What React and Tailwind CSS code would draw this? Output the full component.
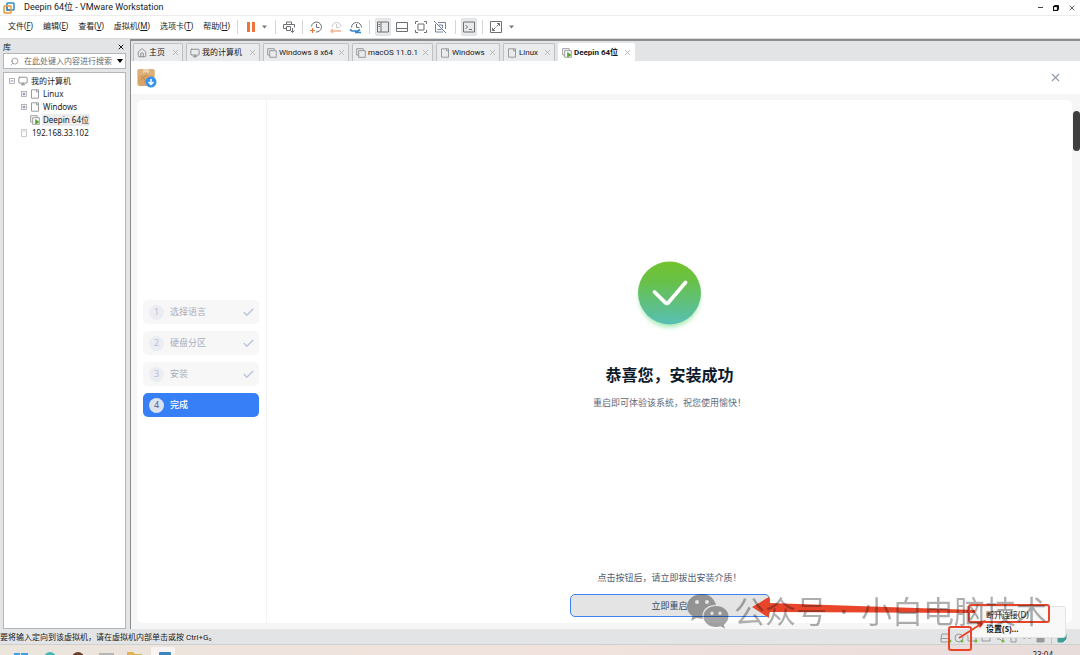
import React, { useState } from 'react';
import { Home, Monitor, X, Search, Check } from 'lucide-react';

const menus = [
  { label: '文件', key: 'F' },
  { label: '编辑', key: 'E' },
  { label: '查看', key: 'V' },
  { label: '虚拟机', key: 'M' },
  { label: '选项卡', key: 'T' },
  { label: '帮助', key: 'H' },
];

const tabs = [
  { id: 'home', label: '主页', icon: 'home', width: 'w-[50px]' },
  { id: 'pc', label: '我的计算机', icon: 'monitor', width: 'w-[74px]' },
  { id: 'win8', label: 'Windows 8 x64', icon: 'stack', width: 'w-[86px]' },
  { id: 'mac', label: 'macOS 11.0.1', icon: 'stack', width: 'w-[81px]' },
  { id: 'win', label: 'Windows', icon: 'page', width: 'w-[64px]' },
  { id: 'linux', label: 'Linux', icon: 'page', width: 'w-[52px]' },
  { id: 'deepin', label: 'Deepin 64位', icon: 'running', width: 'w-[77px]' },
];

const steps = ['选择语言', '硬盘分区', '安装', '完成'];

const PageIcon = () => (
  <svg className="size-[10px] shrink-0" viewBox="0 0 10 10" fill="none" stroke="#8f9193" strokeWidth="0.9">
    <path d="M1.500 .8h7v8.400h-7z" />
    <path d="M6.500 .8v2h2" />
  </svg>
);

const StackIcon = ({ running }) => (
  <svg className="size-[10px] shrink-0" viewBox="0 0 10 10" fill="none" stroke="#8f9193" strokeWidth="0.9">
    <path d="M2.500 7H.700V.700h6.500v1.800" />
    <path d="M2.700 2.700h6.600v6.600H2.700z" />
    {running && <path d="M5 3.800l5 3.100-5 3.100z" fill="#56a632" stroke="white" strokeWidth="0.3" />}
  </svg>
);

const VmIcon = ({ type }) => {
  if (type === 'home') return <Home size={10} strokeWidth={2} className="shrink-0 text-[#7d7f81]" />;
  if (type === 'monitor') return <Monitor size={10} strokeWidth={2} className="shrink-0 text-[#7d7f81]" />;
  if (type === 'page') return <PageIcon />;
  return <StackIcon running={type === 'running'} />;
};

const Expander = ({ open }) => (
  <svg className="size-[6px] shrink-0" viewBox="0 0 6 6" fill="white" stroke="#9a9a9a" strokeWidth="0.7">
    <rect x=".4" y=".4" width="5.200" height="5.200" />
    <path d={open ? 'M1.500 3h3' : 'M1.500 3h3M3 1.500v3'} stroke="#4a5f92" />
  </svg>
);

const ToolButton = ({ label, pressed, children }) => (
  <button
    type="button"
    aria-label={label}
    className={`flex h-[18px] w-4 items-center justify-center rounded-[2px] border ${pressed ? 'border-[#e0e1e2] bg-[#e8e9ea]' : 'border-transparent'}`}
  >
    <svg className="size-[14px] shrink-0" viewBox="0 0 14 14" fill="none" stroke="#6d6f72" strokeWidth="1">
      {children}
    </svg>
  </button>
);

const Separator = () => <span className="h-[14px] w-px bg-[#d5d5d5]" />;

const Caret = () => (
  <svg className="h-1 w-[5px]" viewBox="0 0 5 4">
    <path d="M0 .5h5L2.500 3.500z" fill="#777" />
  </svg>
);

const TitleBar = () => (
  <header className="flex h-4 shrink-0 items-center border-b border-[#ececec] bg-white pl-[3px] font-['Roboto','Noto_Sans_CJK_SC',sans-serif] text-[9px]">
    <svg className="mr-[9px] size-3 shrink-0" viewBox="0 0 12 12" fill="none" strokeWidth="1.500">
      <rect x="4" y="1" width="7" height="7" rx=".8" stroke="#2d8cc4" />
      <rect x="1" y="4" width="7" height="7" rx=".8" stroke="#ee9434" />
      <path d="M4 5v3h3" stroke="#2d8cc4" />
    </svg>
    <h1>Deepin 64位 - VMware Workstation</h1>
    <div className="ml-auto flex items-center gap-[9px] pr-1">
      <button type="button" aria-label="最小化" className="flex w-[6px]">
        <span className="h-px w-[5px] bg-[#444]" />
      </button>
      <button type="button" aria-label="还原" className="flex">
        <svg className="size-[6px]" viewBox="0 0 6 6" fill="none" stroke="#111">
          <path d="M1.500 1V.500h4v4H5" />
          <rect x=".5" y="1.500" width="4" height="4" strokeWidth="1.200" />
        </svg>
      </button>
      <button type="button" aria-label="关闭" className="flex text-[#444]">
        <X size={8} strokeWidth={2.5} />
      </button>
    </div>
  </header>
);

const Toolbar = () => (
  <div className="flex h-[22px] shrink-0 items-center bg-white pl-2">
    <nav className="flex gap-[10px] pb-[2px] text-[8px]">
      {menus.map((menu) => (
        <button key={menu.key} type="button" className="whitespace-nowrap">
          {menu.label}(<u>{menu.key}</u>)
        </button>
      ))}
    </nav>
    <div className="ml-[7px] flex items-center gap-[5px]">
      <Separator />
      <div className="mr-[3px] flex items-center gap-[3px]">
        <ToolButton label="挂起">
          <path d="M4.500 2v10M9.500 2v10" stroke="#ef743b" strokeWidth="3" />
        </ToolButton>
        <Caret />
      </div>
      <Separator />
      <ToolButton label="发送按键">
        <path d="M4.500 4.500V2h5v2.500M4 8.500H1.500v-4h11v3M4.500 6.500h4v4h-4zM10.500 8v4.500M8.500 10.500l2 2 2-2" />
      </ToolButton>
      <Separator />
      <div className="flex items-center gap-1">
        <ToolButton label="拍摄快照">
          <path d="M2.500 6.500a5 5 0 1 1 4.500 5.500M7.500 4v3.500h3" />
          <path d="M1 10.500h5M3.500 8v5" stroke="#ef743b" strokeWidth="1.200" />
        </ToolButton>
        <ToolButton label="恢复快照">
          <path d="M3 7a4.500 4.500 0 1 1 9 0M7.500 4v3.500h3" stroke="#c9c9c9" />
          <path d="M2 11h10M4 9l-2 2 2 2" stroke="#f3b195" strokeWidth="1.400" />
        </ToolButton>
        <ToolButton label="管理快照">
          <path d="M2.500 7.500a5 5 0 1 1 10 0M7.500 4v3.500h3" />
          <path d="M1 9.500l2 1.500h6l2-1.500M12 12.500H6" stroke="#3485cd" strokeWidth="1.600" />
        </ToolButton>
      </div>
      <Separator />
      <div className="mr-[2px] flex items-center gap-[3px]">
        <ToolButton label="显示库" pressed>
          <path d="M1.500 2h11v10h-11zM5 2v10M2.500 4.500H4M2.500 6.500H4" />
        </ToolButton>
        <ToolButton label="显示缩略图栏">
          <path d="M1.500 2.500h11v9h-11zM1.500 8.500h11" />
        </ToolButton>
        <ToolButton label="全屏">
          <path d="M4 1.500H1.500V4M10 1.500h2.500V4M4 12.500H1.500V10M10 12.500h2.500V10M4 4h6v6H4z" />
        </ToolButton>
        <ToolButton label="Unity">
          <path d="M5 2.500h7.500V9M10 12H2.500V4M1 1l12 12M4.500 9.500h4M9.500 8V5H6" stroke="#71839a" />
        </ToolButton>
      </div>
      <Separator />
      <ToolButton label="控制台视图" pressed>
        <path d="M1.500 2h11v10h-11zM3.500 5l2 2-2 2M7 9.500h3" />
      </ToolButton>
      <Separator />
      <ToolButton label="自由拉伸">
        <path d="M1.500 1.500h11v11h-11zM8 3.500h2.500V6M10.500 3.500l-3 3M6 10.500H3.500V8M3.500 10.500l3-3" />
      </ToolButton>
      <Caret />
    </div>
  </div>
);

const Library = () => (
  <aside className="flex w-[130px] shrink-0 flex-col bg-[#e3e4e6] pl-[3px] pr-1 pt-[2px] text-[8px]">
    <div className="flex h-3 shrink-0 items-center justify-between pr-[1px]">
      <h2>库</h2>
      <button type="button" aria-label="关闭库">
        <X size={8} strokeWidth={3} />
      </button>
    </div>
    <label className="flex h-4 shrink-0 items-center border border-[#b5b6b8] bg-white pl-[6px] text-[#555]">
      <Search size={9} className="-scale-x-100 shrink-0 text-[#8a8a8a]" />
      <input
        type="text"
        aria-label="搜索"
        placeholder="在此处键入内容进行搜索"
        className="ml-[5px] w-[91px] min-w-0 bg-transparent outline-none placeholder:text-[#6b6b6b]"
      />
      <svg className="ml-auto mr-[2px] h-1 w-[6px] shrink-0" viewBox="0 0 6 4">
        <path d="M0 0h6L3 4z" />
      </svg>
    </label>
    <ul className="mt-[3px] flex-1 border border-[#b5b6b8] bg-white pt-px">
      <li className="flex h-[13px] items-center gap-[3px] pl-[5px]">
        <Expander open />
        <VmIcon type="monitor" />
        我的计算机
      </li>
      <li className="flex h-[13px] items-center gap-[3px] pl-[17px]">
        <Expander />
        <PageIcon />
        Linux
      </li>
      <li className="flex h-[13px] items-center gap-[3px] pl-[17px]">
        <Expander />
        <PageIcon />
        Windows
      </li>
      <li className="flex h-[13px] items-center gap-[2px] pl-[26px]">
        <StackIcon running />
        <span className="bg-[#ededed] px-px">Deepin 64位</span>
      </li>
      <li className="flex h-[13px] items-center gap-[5px] pl-[17px]">
        <svg className="h-2 w-[6px]" viewBox="0 0 6 8" fill="none" stroke="#b3b3b3" strokeWidth=".7">
          <path d="M.5.500h5v7h-5zM1.500 2h3" />
        </svg>
        192.168.33.102
      </li>
    </ul>
  </aside>
);

const TabBar = ({ active, onSelect }) => (
  <div role="tablist" className="flex h-[20px] shrink-0 items-end gap-[3px] bg-[#e3e4e6] pl-[2px] font-['Roboto','Noto_Sans_CJK_SC',sans-serif] text-[8px]">
    {tabs.map((tab) => {
      const isActive = tab.id === active;
      return (
        <div
          key={tab.id}
          className={`flex h-[18px] items-center rounded-t-[2px] border border-b-0 pl-[3px] pr-[2px] ${tab.width} ${isActive ? 'border-white bg-white font-bold' : 'border-[#bfc0c2] bg-[#eaebed]'}`}
        >
          <button
            type="button"
            role="tab"
            aria-selected={isActive}
            onClick={() => onSelect(tab.id)}
            className="flex items-center gap-[2px] whitespace-nowrap"
          >
            <VmIcon type={tab.icon} />
            {tab.label}
          </button>
          <button type="button" aria-label={`关闭 ${tab.label}`} className="ml-auto text-[#b4b4b4]">
            <X size={9} strokeWidth={2.5} />
          </button>
        </div>
      );
    })}
  </div>
);

const InstallerSteps = () => (
  <ol className="flex w-[130px] shrink-0 flex-col gap-[7px] border-r border-[#f3f3f3] pl-[6px] pr-[7px] pt-[200px] text-[9px]">
    {steps.map((step, i) => {
      const current = i === steps.length - 1;
      return (
        <li
          key={step}
          className={`flex h-6 shrink-0 items-center gap-[6px] rounded-[5px] pl-[6px] pr-1 ${current ? 'bg-[#377ff7] font-medium text-white' : 'bg-[#f7f7f7] text-[#a9aebb]'}`}
        >
          <span className={`flex size-[15px] items-center justify-center rounded-full ${current ? 'bg-[#dbe2f0] text-[#6676a0]' : 'bg-[#ebedf3] text-[#b6c0d4]'}`}>
            {i + 1}
          </span>
          {step}
          {!current && <Check size={13} strokeWidth={2.5} className="ml-auto text-[#b9c4d8]" />}
        </li>
      );
    })}
  </ol>
);

const SuccessMark = () => (
  <svg className="h-[74px] w-[78px]" viewBox="0 0 78 74">
    <defs>
      <linearGradient id="mark" x1="0" y1="0" x2="0" y2="1">
        <stop offset="0" stopColor="#74c32e" />
        <stop offset=".3" stopColor="#68c146" />
        <stop offset="1" stopColor="#57bfb5" />
      </linearGradient>
      <filter id="glow" x="-20%" y="-20%" width="140%" height="140%">
        <feGaussianBlur stdDeviation="2.500" />
      </filter>
    </defs>
    <circle cx="38.500" cy="36" r="30" fill="#9ee8ae" filter="url(#glow)" />
    <circle cx="38.500" cy="32" r="31.500" fill="url(#mark)" />
    <path d="M23.500 31L34.300 41.500Q36 43 37.700 41.300L54.500 21.500" fill="none" stroke="white" strokeWidth="3.800" strokeLinecap="round" />
  </svg>
);

const Installer = () => (
  <section className="flex min-h-0 flex-1 flex-col bg-[#f6f6f6]">
    <div className="flex h-[33px] shrink-0 items-center justify-between bg-white pl-[6px] pr-[18px]">
      <svg className="size-5" viewBox="0 0 20 20">
        <rect x=".5" y="1" width="17" height="17" rx="2" fill="#d9a468" />
        <path d="M.5 7V3a2 2 0 0 1 2-2h13a2 2 0 0 1 2 2v4z" fill="#deb07a" />
        <path d="M6 1h6v4l-3-1-3 1z" fill="#ecd2ae" />
        <path d="M4 12l6-6M7 14l5-5M5 8l4 5" stroke="#c28b4c" strokeWidth="1" />
        <circle cx="14" cy="14" r="5.500" fill="#3794ed" />
        <path d="M14 11v5M11.500 14l2.500 2.500 2.500-2.500" fill="none" stroke="white" strokeWidth="1.500" />
      </svg>
      <button type="button" aria-label="退出安装" className="text-[#8f99ab]">
        <X size={13} strokeWidth={2} />
      </button>
    </div>
    <div className="mb-[6px] ml-[6px] mr-2 mt-[6px] flex min-h-0 flex-1 overflow-hidden rounded-[5px] bg-white">
      <InstallerSteps />
      <main className="flex flex-1 flex-col items-center pt-[161px]">
        <SuccessMark />
        <h2 className="mt-[30px] text-base font-bold leading-5 text-[#0c1a2c]">恭喜您，安装成功</h2>
        <p className="mt-[10px] text-[9px] leading-4 text-[#5c6b80]">重启即可体验该系统，祝您使用愉快！</p>
        <p className="mb-2 mt-auto text-[9px] leading-4 text-[#4c5c74]">点击按钮后，请立即拔出安装介质！</p>
        <button
          type="button"
          className="mb-[6px] h-[23px] w-[200px] rounded-[5px] border border-[#3c83f3] bg-[#e4e4e4] text-[9px] text-[#3a4658]"
        >
          立即重启
        </button>
      </main>
    </div>
  </section>
);

const StatusBar = () => (
  <footer className="flex h-4 shrink-0 items-center justify-between border-b border-[#cfcfcf] bg-[#e3e4e6] pr-[13px] text-[8px]">
    <span className="whitespace-nowrap pt-[2px] font-['Roboto','Noto_Sans_CJK_SC',sans-serif]">要将输入定向到该虚拟机，请在虚拟机内部单击或按 Ctrl+G。</span>
    <svg className="mt-[3px] h-[11px] w-[128px]" viewBox="0 0 128 11" fill="none" stroke="#98999b" strokeWidth="1">
      <path d="M3 1h6l1 4v4H2V5zM2 5.500h8" />
      <circle cx="20" cy="5" r="4" />
      <path d="M29 2h8v6h-8zM43 3h8v5h-8zM45 1h4v2M58 4h3l3-3v8l-3-3h-3M72 2h5v7h-5zM84 5h3M89 5h3" />
      <path d="M98 2h7v7h-7z" fill="#98999b" />
      <path d="M112.500 0v11" stroke="#c2c2c2" />
      <path d="M119 1h8v5l-3 3h-5z" fill="#3f9d94" stroke="#3f9d94" />
      <g fill="#73bb38" stroke="none">
        <circle cx="11" cy="8" r="1.500" />
        <circle cx="23" cy="8" r="1.500" />
        <circle cx="37" cy="8" r="1.500" />
        <circle cx="64" cy="8" r="1.500" />
      </g>
    </svg>
  </footer>
);

const Taskbar = () => (
  <div className="flex h-[10px] shrink-0 items-start overflow-hidden bg-linear-to-r from-[#ebe5dc] via-[#f1e2dd] to-[#e8dcdb] pr-[27px]">
    <svg className="h-[10px] w-[180px]" viewBox="0 0 180 10">
      <rect x="151" y="2" width="24" height="12" rx="2" fill="#f8f4f1" />
      <path d="M14 8h6v6h-6zM21 8h7v6h-7z" fill="#3aa3e4" />
      <circle cx="50" cy="13" r="6" fill="#45b9ba" />
      <circle cx="78" cy="13" r="6" fill="#6d3c2c" />
      <path d="M99 8h15v4H99z" fill="#b6b6b6" />
      <path d="M127 7h6l2 2h7v4h-15z" fill="#dfb44e" />
      <rect x="159" y="7" width="12" height="8" rx="1" fill="#3b87bd" />
    </svg>
    <time className="ml-auto mt-1 text-[8px] leading-3">23:04</time>
  </div>
);

const DeviceMenu = () => (
  <div role="menu" className="absolute bottom-[17px] right-[14px] flex h-8 w-[98px] flex-col rounded-[3px] border border-[#e3e3e3] bg-[#f8f8f8] pl-[17px] pt-px text-[8px] leading-[14px]">
    <button type="button" role="menuitem" className="text-left">断开连接(D)</button>
    <button type="button" role="menuitem" className="text-left font-bold">设置(S)...</button>
  </div>
);

const Annotations = () => (
  <svg className="pointer-events-none absolute bottom-0 right-0 h-[65px] w-[340px]" viewBox="0 0 340 65" fill="none" stroke="#e9452b">
    <path d="M12 17l17-10v6l206 7v3l-206-1v6z" fill="#e9452b" stroke="none" />
    <rect x="229" y="15" width="80" height="17" rx="2" strokeWidth="2" />
    <rect x="209" y="37" width="22" height="23" rx="2" strokeWidth="2" />
    <path d="M219 48l22-14" strokeWidth="2" />
    <path d="M246 30l-10 2 4 6z" fill="#e9452b" stroke="none" />
  </svg>
);

const Watermark = () => (
  <div className="pointer-events-none absolute bottom-[26px] right-[33px] flex items-center gap-1 opacity-35">
    <svg className="h-[36px] w-[44px] shrink-0" viewBox="0 0 44 36">
      <path fillRule="evenodd" d="M16 1C7.500 1 1 6.500 1 13.500c0 4 2 7.500 5.500 9.500L5 28l5.500-3c1.700.5 3.500.8 5.500.8h1C14.500 18 21 11.500 30 12 28.500 5.500 23 1 16 1zM11 7a2 2 0 1 0 0 4 2 2 0 0 0 0-4zm10 0a2 2 0 1 0 0 4 2 2 0 0 0 0-4z" />
      <path fillRule="evenodd" d="M30 13c-7 0-12.500 4.500-12.500 10.500S23 34 30 34c1.500 0 3-.3 4.500-.7l4.500 2.400-1.200-4c3-2 4.700-5 4.700-8.200C42.500 17.500 37 13 30 13zm-4 5.500a1.700 1.700 0 1 0 0 3.400 1.700 1.700 0 0 0 0-3.400zm8 0a1.700 1.700 0 1 0 0 3.400 1.700 1.700 0 0 0 0-3.400z" />
    </svg>
    <span className="flex whitespace-nowrap text-[31px] leading-9">
      <span>公众号</span>
      <span className="w-[34px] text-center">·</span>
      <span>小白电脑技术</span>
    </span>
  </div>
);

export default function App() {
  const [active, setActive] = useState('deepin');

  return (
    <div className="relative flex h-screen flex-col overflow-hidden bg-[#e3e4e6] font-['Noto_Sans','Noto_Sans_CJK_SC',sans-serif] text-[#1a1a1a]">
      <TitleBar />
      <Toolbar />
      <div className="flex min-h-0 flex-1 border-t border-[#d9dadb]">
        <Library />
        <div className="flex min-w-0 flex-1 flex-col border-l border-t-2 border-[#8b8c8e]">
          <TabBar active={active} onSelect={setActive} />
          <Installer />
        </div>
      </div>
      <StatusBar />
      <Taskbar />
      {/* edge handle of the side panel */}
      <div className="absolute right-0 top-[111px] h-10 w-[7px] rounded-[4px] bg-[#3f3f3f]" />
      <DeviceMenu />
      <Annotations />
      <Watermark />
    </div>
  );
}
